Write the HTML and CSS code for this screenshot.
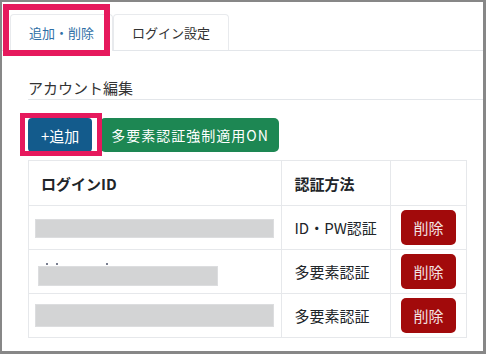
FILE: index.html
```html
<!DOCTYPE html>
<html>
    <head>
        <title>アカウント編集</title>
        <meta charset="utf-8">
        <link rel="stylesheet" href="styles.css">
    </head>
    <body>
        <div class='frame'>
            <ul class='tabs'>
                <li class='tab active'>追加・削除</li>
                <li class='tab'>ログイン設定</li>
            </ul>
            <div class='panel'>
                <h2 class='title'>アカウント編集</h2>
                <div class='actions'>
                    <button class='btn btnAdd'>+追加</button>
                    <button class='btn btnMfa'>多要素認証強制適用ON</button>
                </div>
                <table class='accounts'>
                    <tr class='head'>
                        <th class='colId'>ログインID</th>
                        <th class='colAuth'>認証方法</th>
                        <th class='colDel'></th>
                    </tr>
                    <tr>
                        <td><span class='redact redactLong'></span></td>
                        <td>ID・PW認証</td>
                        <td><button class='btnDel'>削除</button></td>
                    </tr>
                    <tr>
                        <td>
                            <span class='crumbs'><i></i><i></i><i class='far'></i></span>
                            <span class='redact redactShort'></span>
                        </td>
                        <td>多要素認証</td>
                        <td><button class='btnDel'>削除</button></td>
                    </tr>
                    <tr>
                        <td><span class='redact redactTall'></span></td>
                        <td>多要素認証</td>
                        <td><button class='btnDel'>削除</button></td>
                    </tr>
                </table>
            </div>
            <span class='mark markTab'></span>
            <span class='mark markAdd'></span>
        </div>
    </body>
</html>
```

FILE: styles.css
```css
* {
    margin: 0;
    padding: 0;
    box-sizing: border-box;
}

body {
    background: white;
    color: #212529;
    font-family: "Noto Sans CJK JP", "Noto Sans", sans-serif;
    font-size: 15px;
}

.frame {
    position: relative;
    width: 486px;
    height: 354px;
    border: 2px solid #878787;
    border-right-width: 3px;
    border-bottom-width: 3px;
    overflow: hidden;
}

.tabs {
    display: flex;
    list-style: none;
    padding: 12px 0 0 8px;
    border-bottom: 1px solid #e3e6ea;
}

.tab {
    font-size: 13px;
    line-height: 35px;
    height: 36px;
    padding: 0 18px;
    border: 1px solid #e8eaed;
    border-bottom: none;
    border-radius: 4px 4px 0 0;
    color: #333;
}

.tab.active {
    color: #2f6fa6;
    margin-bottom: -1px;
    height: 37px;
    background: white;
}

.panel {
    padding-left: 26px;
}

.title {
    font-size: 15px;
    font-weight: normal;
    line-height: 22px;
    margin-top: 26px;
    border-bottom: 1px solid #e3e6ea;
    color: #333;
}

.actions {
    display: flex;
    gap: 8px;
    margin-top: 18px;
}

.btn {
    font-family: inherit;
    border: none;
    color: white;
    height: 34px;
    border-radius: 4px;
    font-size: 15px;
}

.btnAdd {
    background: #135b8c;
    padding: 0 13px;
}

.btnMfa {
    background: #1d8753;
    font-size: 14px;
    letter-spacing: 1px;
    padding: 0 10px 0 11px;
    border-radius: 5px;
}

.accounts {
    margin-top: 8px;
    width: 439px;
    border-collapse: collapse;
}

.accounts th,
.accounts td {
    border: 1px solid #e6e8eb;
    text-align: left;
    padding: 0 12px;
    height: 44px;
    white-space: nowrap;
}

.accounts .head th {
    height: 45px;
    font-weight: bold;
}

.colId {
    width: 254px;
}

.colAuth {
    width: 109px;
}

.accounts td:first-child {
    padding: 0 6px;
    position: relative;
}

.accounts td:last-child {
    padding: 0 10px;
}

.redact {
    display: block;
    background: #d3d4d5;
    border: 1px solid #dcdddf;
}

.redactLong {
    width: 239px;
    height: 19px;
    margin-top: 1px;
}

.redactShort {
    width: 180px;
    height: 20px;
    margin: 9px 0 0 3px;
}

.redactTall {
    width: 239px;
    height: 23px;
}

.crumbs {
    position: absolute;
    left: 17px;
    top: 13px;
    display: flex;
    gap: 8px;
}

.crumbs i {
    width: 2px;
    height: 2px;
    background: #7a7f90;
}

.crumbs .far {
    margin-left: 40px;
}

.btnDel {
    font-family: inherit;
    font-size: 15px;
    border: none;
    color: #f3e3e3;
    background: #a20a0b;
    width: 55px;
    height: 35px;
    border-radius: 5px;
}

.mark {
    position: absolute;
    border: 6px solid #e6195d;
}

.markTab {
    left: 1px;
    top: 2px;
    width: 107px;
    height: 52px;
}

.markAdd {
    left: 18px;
    top: 111px;
    width: 82px;
    height: 43px;
    border-width: 5px;
}
```
